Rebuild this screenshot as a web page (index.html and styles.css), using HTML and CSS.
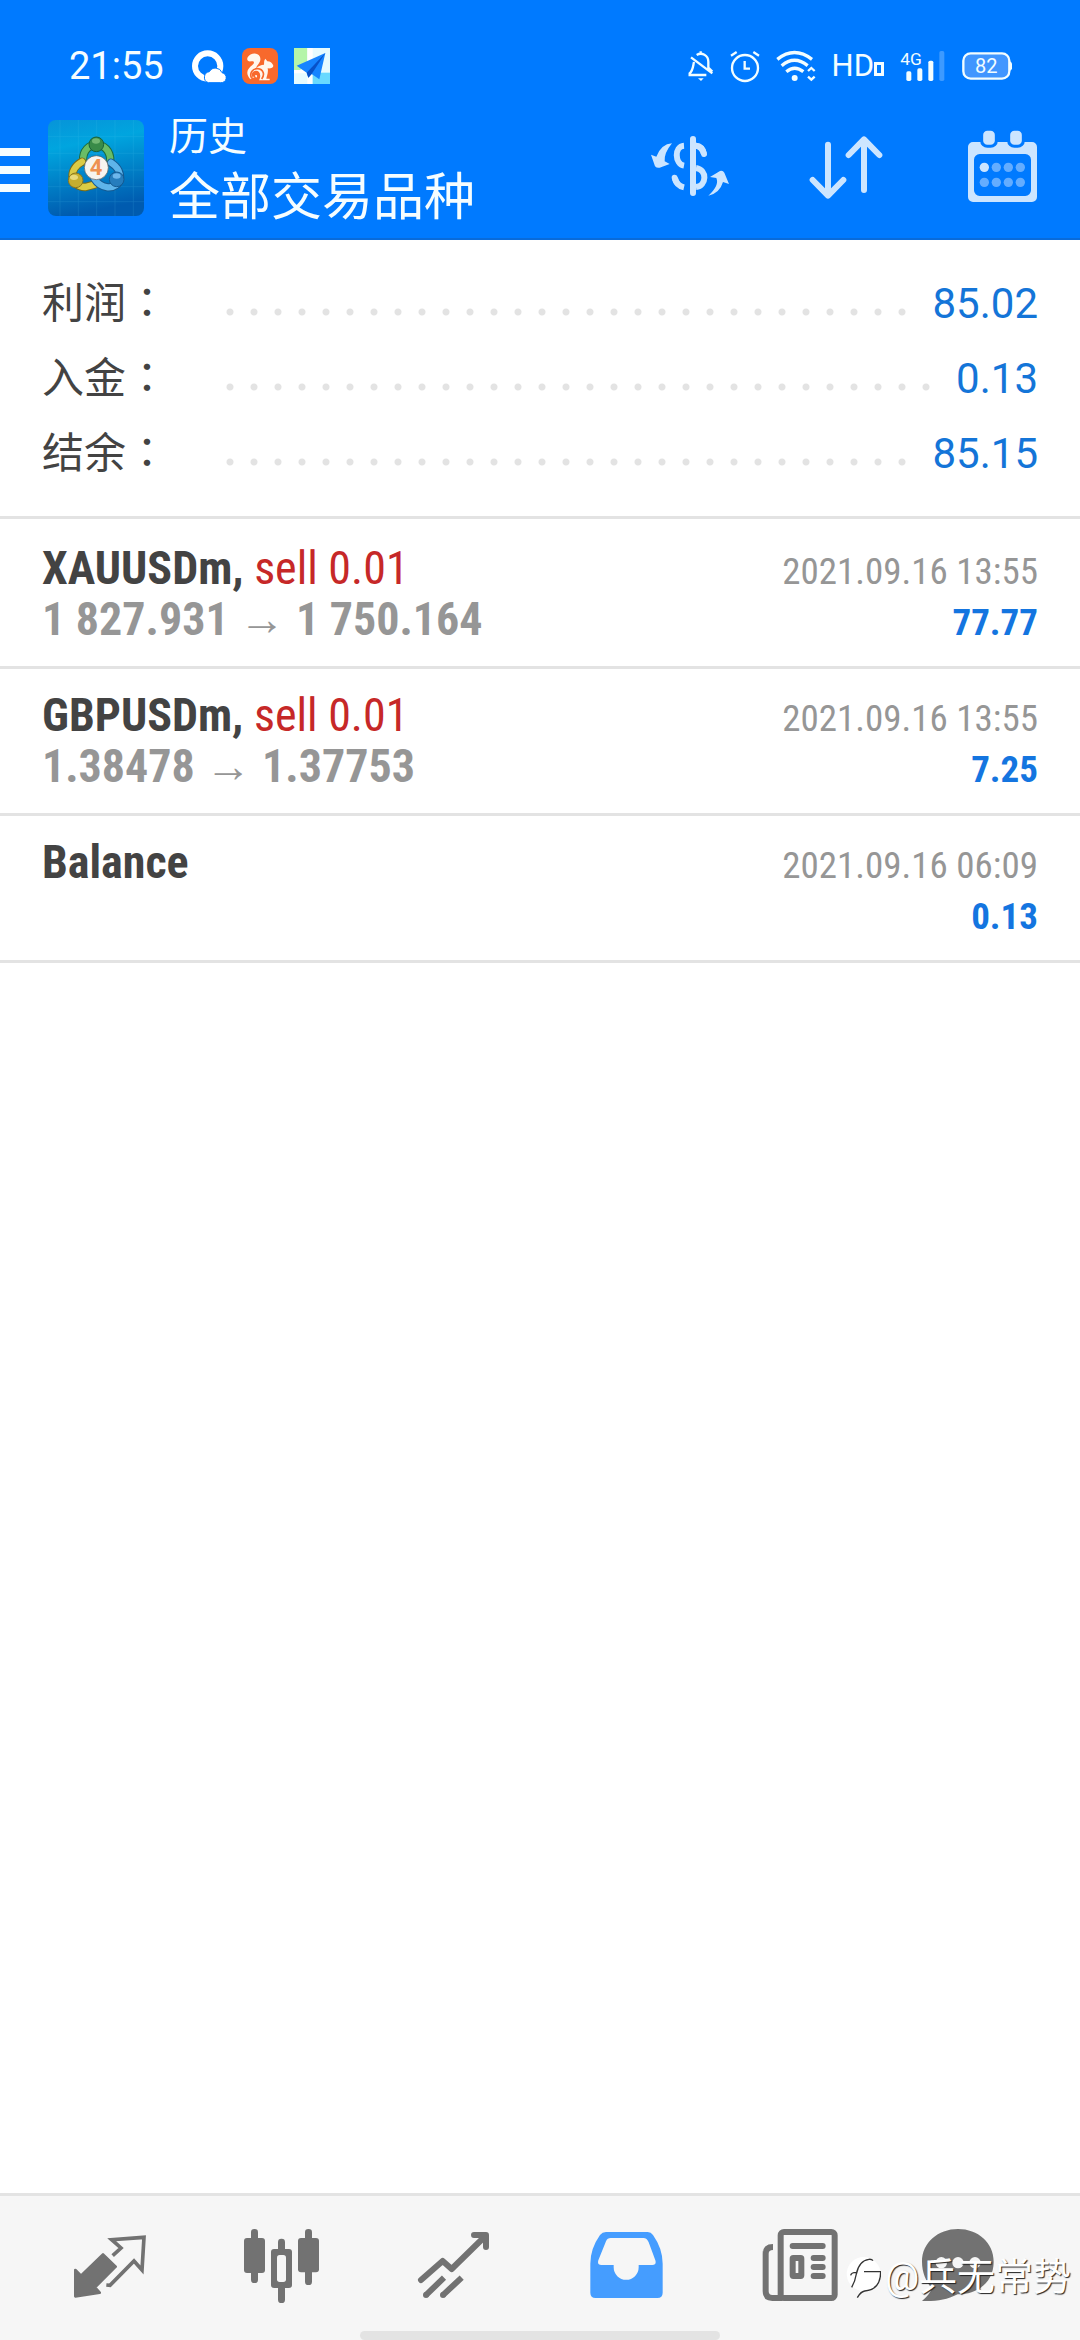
FILE: index.html
```html
<!DOCTYPE html>
<html lang="zh-CN">
<head>
<meta charset="utf-8">
<meta name="viewport" content="width=device-width, initial-scale=1">
<title>历史</title>
<link rel="stylesheet" href="styles.css">
</head>
<body>
<header class="header">
  <div class="status">
    <time class="clock">21:55</time>
    <div class="apps">
      <svg width="36" height="36" viewBox="567 84 108 108" aria-hidden="true">
        <circle cx="620" cy="138" r="38" fill="none" stroke="#fff" stroke-width="18"/>
        <path d="M622 188a17 17 0 0 1 3-33a21 21 0 0 1 38 3a15 15 0 0 1-5 30z" fill="#fff" stroke="#007aff" stroke-width="3"/>
      </svg>
      <svg width="36" height="36" viewBox="723 84 108 108" aria-hidden="true">
        <rect x="723" y="84" width="108" height="108" rx="24" fill="#f8692c"/>
        <path d="M748 178c-16-19-9-31 6-43c9-8 4-13-3-11c-10 2-15-4-11-12c7-13 29-16 36-3c8 16-8 24-11 36c8-8 15-10 24-11c1-8-1-12 4-18l6 8c9 0 16 6 18 13c0 7-9 9-17 8c3 14-4 25-4 31h10v5h-32c9-18 0-30-10-29c-15 2-16 22-2 22c7 0 9-9 2-10" fill="#fff7ed"/>
        <path d="M752 174c-8-13 3-29 18-28c18 2 22 18 12 31M766 175a8 8 0 1 1 8-13" fill="none" stroke="#f8692c" stroke-width="5"/>
      </svg>
      <svg width="36" height="36" viewBox="879 84 108 108" aria-hidden="true">
        <path fill="#e6fbff" d="M879 84h108v108H879z"/>
        <path fill="#b5f5a9" d="M879 84h40v44l-22 22h-18z"/>
        <path fill="#fff" d="M919 84h16v108h-16zM879 150h40v10h-40z"/>
        <path fill="#68d9ff" d="M935 158h52v34h-52z"/>
        <path fill="#1684ff" d="M973 99l-86 38 30 21 5 15 10-11 23 16z"/>
        <path fill="#0751c8" d="M973 99l-56 59 5 15 10-11z"/>
      </svg>
    </div>
    <div class="indicators">
      <svg width="26" height="36" viewBox="134 84 78 108" fill="none" stroke="#f2fdff" stroke-width="7" aria-hidden="true">
        <path d="M143 112l64 48M152 126c-3 10-2 24-13 34v5h50M160 105c15-9 35 0 35 20v18l12 12M172 94v8"/><path d="M164 175h17l-8 8z" fill="#f2fdff" stroke="none"/>
      </svg>
      <svg width="30" height="36" viewBox="261 84 90 108" fill="none" stroke="#f2fdff" stroke-width="7" aria-hidden="true">
        <circle cx="306" cy="144" r="39"/><path d="M305 123v23h16M264 107l17-11M331 96l17 11"/>
      </svg>
      <svg width="40" height="36" viewBox="409 84 120 108" fill="none" stroke="#f2fdff" stroke-width="10" aria-hidden="true">
        <path d="M413 118q51-41 104 0M426 137q38-32 78 0M440 155q25-21 51 0"/><circle cx="465" cy="174" r="9" fill="#f2fdff" stroke="none"/><path d="M505 153l10-9 10 9M505 170l10 9 10-9" stroke-width="7"/>
      </svg>
      <span class="hd">HD<i class="sim"></i></span>
      <svg width="46" height="36" viewBox="773 84 138 108" aria-hidden="true">
        <text x="774" y="136" class="network">4G</text>
        <g fill="#f2fdff"><rect x="792" y="154" width="15" height="29" rx="5"/><rect x="825" y="145" width="15" height="38" rx="5"/><rect x="858" y="122" width="15" height="61" rx="5"/><rect x="891" y="93" width="15" height="90" rx="5" opacity=".25"/></g>
      </svg>
      <svg width="50" height="36" viewBox="962 84 150 108" aria-hidden="true">
        <rect x="966" y="100" width="138" height="76" rx="22" fill="#4096ff" stroke="#f2fdff" stroke-width="7"/>
        <path d="M1106 124q7 3 7 14t-7 14z" fill="#f2fdff"/><text x="1035" y="160" text-anchor="middle" class="battery">82</text>
      </svg>
    </div>
  </div>
  <div class="toolbar">
    <button class="menu" aria-label="菜单"><i></i><i></i><i></i></button>
    <svg class="logo" width="96" height="96" viewBox="144 300 288 288" aria-hidden="true">
      <defs>
        <linearGradient id="sky" x1="0" y1="0" x2=".2" y2="1"><stop stop-color="#0794d8"/><stop offset=".3" stop-color="#00a5df"/><stop offset="1" stop-color="#005baf"/></linearGradient>
      </defs>
      <rect x="144" y="300" width="288" height="288" rx="24" fill="url(#sky)"/>
      <path d="M180 300v288M235 300v288M290 300v288M345 300v288M400 300v288M144 350h288M144 400h288M144 450h288M144 500h288M144 545h288" stroke="#5bcdf2" stroke-width="2" opacity=".2"/>
      <g fill="none" stroke-linecap="round">
        <path d="M249 425c-4-68 84-68 82 0" stroke="#1d6b3d" stroke-width="25"/>
        <path d="M249 425c-4-68 84-68 82 0" stroke="#69bd66" stroke-width="19"/>
        <path d="M246 425c-46 26-32 78 10 76l30-8" stroke="#786b18" stroke-width="25"/>
        <path d="M246 425c-46 26-32 78 10 76l30-8" stroke="#dbcb45" stroke-width="19"/>
        <path d="M333 428c44 28 30 77-10 74c-18-2-32-13-40-26" stroke="#155a91" stroke-width="25"/>
        <path d="M333 428c44 28 30 77-10 74c-18-2-32-13-40-26" stroke="#5eb4ea" stroke-width="19"/>
      </g>
      <g stroke-width="3">
        <circle cx="289" cy="373" r="22" fill="#398b48" stroke="#17603b"/><circle cx="227" cy="481" r="22" fill="#c5ae2f" stroke="#877522"/><circle cx="350" cy="478" r="22" fill="#267dbd" stroke="#155a91"/>
      </g>
      <ellipse cx="288" cy="363" rx="12" ry="8" fill="#8acb85" opacity=".7"/><ellipse cx="222" cy="472" rx="12" ry="8" fill="#f6eb9a" opacity=".7"/><ellipse cx="350" cy="468" rx="12" ry="8" fill="#8cceff" opacity=".7"/>
      <circle cx="289" cy="443" r="36" fill="#f6f4ef" stroke="#555" stroke-width="2"/>
      <text x="288" y="466" text-anchor="middle" class="version">4</text>
    </svg>
    <div class="titles"><h1>历史</h1><p>全部交易品种</p></div>
    <div class="actions">
      <button aria-label="货币"><svg width="156" height="144" viewBox="-84 228 468 432" fill="none" stroke="#cce5ff" stroke-width="18" stroke-linecap="round">
        <path d="M159 357v162M168 377q18 2 24 25M132 377c-30 2-28 55 0 60M105 474q4 23 27 28" stroke-linecap="butt"/><path d="M168 377q20 2 24 25M104 473q1 8 6 14M159 357v162"/><path d="M168 444c35 6 32 53 0 57" stroke-linecap="butt"/>
        <path d="M96 370Q64 372 49 410l-16-6 12 35q6 6 14 4l30-11-15-8q-2-25 22-54zM205 527q34-31 24-53l-19-3 30-18q9-2 13 5l14 34-18-6q-10 34-44 41z" fill="#cce5ff" stroke="none"/>
      </svg></button>
      <button aria-label="排序"><svg width="156" height="144" viewBox="384 228 468 432" fill="none" stroke="#cce5ff" stroke-width="18" stroke-linecap="round" stroke-linejoin="round">
        <path d="M564 374v152M518 480l46 47 46-47M672 510V359M626 405l46-47 46 47"/>
      </svg></button>
      <button aria-label="日期"><svg width="156" height="144" viewBox="852 228 468 432">
        <path fill="#cce5ff" fill-rule="evenodd" d="M999 366H1176a15 15 0 0 1 15 15V531a15 15 0 0 1-15 15H999a15 15 0 0 1-15-15V381a15 15 0 0 1 15-15zM1019 402a17 17 0 0 0-17 17v92a17 17 0 0 0 17 17h137a17 17 0 0 0 17-17v-92a17 17 0 0 0-17-17z"/>
        <g fill="#cce5ff" stroke="#007aff" stroke-width="9"><rect x="1025" y="328" width="44" height="51" rx="17"/><rect x="1106" y="328" width="44" height="51" rx="17"/></g>
        <g fill="#64adff"><circle cx="1033" cy="442" r="14" fill="#cce5ff"/><circle cx="1069" cy="442" r="14"/><circle cx="1105" cy="442" r="14"/><circle cx="1141" cy="442" r="14"/><circle cx="1033" cy="487" r="14"/><circle cx="1069" cy="487" r="14"/><circle cx="1105" cy="487" r="14"/><circle cx="1141" cy="487" r="14"/></g>
      </svg></button>
    </div>
  </div>
</header>

<main class="content">
  <dl class="summary">
    <div class="total"><dt>利润<span class="colon" lang="zh-TW">：</span></dt><dd>85.02</dd></div>
    <div class="total"><dt>入金<span class="colon" lang="zh-TW">：</span></dt><dd>0.13</dd></div>
    <div class="total"><dt>结余<span class="colon" lang="zh-TW">：</span></dt><dd>85.15</dd></div>
  </dl>
  <ul class="deals">
    <li class="deal">
      <p class="line"><strong class="symbol">XAUUSDm, <span class="side">sell 0.01</span></strong><time class="date">2021.09.16 13:55</time></p>
      <p class="line"><span class="prices">1 827.931 → 1 750.164</span><b class="profit">77.77</b></p>
    </li>
    <li class="deal">
      <p class="line"><strong class="symbol">GBPUSDm, <span class="side">sell 0.01</span></strong><time class="date">2021.09.16 13:55</time></p>
      <p class="line"><span class="prices">1.38478 → 1.37753</span><b class="profit">7.25</b></p>
    </li>
    <li class="deal">
      <p class="line"><strong class="symbol">Balance</strong><time class="date">2021.09.16 06:09</time></p>
      <p class="line"><span class="prices">&nbsp;</span><b class="profit">0.13</b></p>
    </li>
  </ul>
</main>

<nav class="tabs">
  <a href="#quotes" aria-label="行情"><svg width="172" height="144" viewBox="72 48 516 432">
    <path fill="#727272" stroke="#727272" stroke-width="8" stroke-linejoin="round" d="M226 270l17 17 66-64 38 37-62 62 14 16-73 11z"/>
    <path fill="none" stroke="#727272" stroke-width="11" d="M338 227l25-23-28-25 97-7-6 98-24-27-72 73-11-1"/>
  </svg></a>
  <a href="#charts" aria-label="图表"><svg width="172" height="144" viewBox="588 48 516 432" fill="#727272">
    <rect x="732" y="174" width="63" height="105" rx="9"/><rect x="753" y="147" width="21" height="162" rx="10"/>
    <rect x="894" y="174" width="63" height="103" rx="9"/><rect x="915" y="147" width="21" height="168" rx="10"/>
    <rect x="813" y="207" width="63" height="117" rx="9"/><rect x="834" y="176" width="21" height="40" rx="10"/><rect x="834" y="315" width="21" height="54" rx="10"/><rect x="831" y="225" width="27" height="81" rx="8" fill="#f6f6f6"/>
  </svg></a>
  <a href="#trade" aria-label="交易"><svg width="172" height="144" viewBox="24 48 516 432" fill="none" stroke="#727272" stroke-width="18" stroke-linejoin="round">
    <path stroke-linecap="round" d="M183 300l65-57 27 24 98-96M342 165h36v36"/><path d="M197 346l55-53M248 346l57-53"/><g fill="#727272" stroke="none"><circle cx="198" cy="345" r="9"/><circle cx="249" cy="345" r="9"/></g>
  </svg></a>
  <a href="#history" aria-label="历史" aria-current="page"><svg width="172" height="144" viewBox="540 48 516 432">
    <path fill="#459dff" fill-rule="evenodd" d="M738 156H863q10 0 16 9q29 41 29 86v87q0 16-16 16H707q-16 0-16-16V251q0-45 29-86q7-9 18-9zM752 174q-10 0-14 10l-23 57q-4 14 9 14h37v7a37 37 0 0 0 75 0v-7h41q13 0 9-14l-20-54q-5-13-16-13z"/>
  </svg></a>
  <a href="#news" aria-label="新闻"><svg width="172" height="144" viewBox="-24 48 516 432" fill="none" stroke="#727272" stroke-width="18">
    <rect x="182" y="156" width="162" height="198" rx="10"/><path d="M159 201q-22 0-22 20v113q0 20 20 20h30"/>
    <path stroke-linecap="round" d="M218 198h90M281 234h27M281 261h27M281 288h27"/><rect x="218" y="234" width="26" height="54" rx="2"/>
  </svg></a>
  <a href="#messages" aria-label="消息"><svg width="172" height="144" viewBox="492 48 516 432">
    <path fill="#727272" d="M714 147c60 0 107 41 107 98c0 62-48 98-108 98c-35 17-60 21-107 20q20-16 31-38c-19-18-31-48-31-80c0-57 48-98 108-98z"/>
    <g fill="#f6f6f6"><circle cx="664" cy="248" r="17"/><circle cx="714" cy="248" r="17"/><circle cx="765" cy="248" r="17"/></g>
  </svg></a>
  <div class="watermark">
    <svg width="36" height="42" viewBox="366 243 108 126" aria-hidden="true">
      <circle cx="422" cy="297" r="51" fill="#fff"/><path d="M383 301q2-10 20-9M386 337q10-16 14-40q8-40 38-44q8-1 12 4M423 290h50q0 54-48 58q-12 2-22 20" fill="none" stroke="#333" stroke-width="4"/>
    </svg><span>@兵无常势</span>
  </div>
  <i class="home-bar"></i>
</nav>
</body>
</html>
```
FILE: styles.css
```css
* { box-sizing: border-box; }

body {
  margin: 0;
  min-height: 100vh;
  display: flex;
  flex-direction: column;
  background: #fff;
  color: #434343;
  font-family: Roboto, "Noto Sans CJK SC", sans-serif;
}

h1, p, ul, dl, dd { margin: 0; padding: 0; }
svg { display: block; flex: none; }
button { padding: 0; border: 0; background: none; }

/* Header */
.header {
  background: #007aff;
  color: #f5fdff;
  box-shadow: inset 0 -2px #096bda;
}

.status {
  display: flex;
  align-items: center;
  height: 96px;
  padding: 36px 68px 0 69px;
}

.clock { font-size: 38px; line-height: 60px; }
.apps { display: flex; gap: 16px; margin-left: 26px; }
.indicators { display: flex; align-items: center; gap: 16px; margin-left: auto; }
.hd { display: flex; align-items: baseline; font-size: 31px; line-height: 36px; }
.sim { width: 10px; height: 14px; border: 3px solid #f5fdff; }
.network { font: 52px Roboto, sans-serif; fill: #f2fdff; }
.battery { font: 60px Roboto, sans-serif; fill: #f2fdff; }
.version { font: bold 66px Roboto, sans-serif; fill: #ee9150; }

.toolbar { display: flex; align-items: center; height: 144px; }
.menu { display: flex; flex-direction: column; gap: 10px; width: 30px; padding-top: 4px; }
.menu i { height: 8px; background: #f5fdff; }
.logo { margin-left: 18px; }
.titles { margin-left: 25px; padding-top: 4px; white-space: nowrap; }
.titles h1 { font-size: 39px; font-weight: 400; line-height: 56px; }
.titles p { font-size: 51px; line-height: 66px; }
.actions { display: flex; margin-left: auto; }

/* Totals */
.summary { padding: 26px 42px 25px; border-bottom: 3px solid #e3e3e3; }
.total { display: flex; align-items: center; font-size: 42px; line-height: 75px; }
.total dt { width: 176px; }
.total dd { flex: 1; display: flex; align-items: center; color: #1475d8; }
.total dd::before {
  content: "";
  flex: 1;
  height: 8px;
  margin: 16px 16px 0 0;
  background: radial-gradient(circle at center, #e3e3e3 3px, transparent 4px) 0 0 / 24px 8px repeat-x;
}
.colon { font-family: "Noto Sans CJK TC", sans-serif; line-height: 1; }

/* Deals */
.deals { padding-top: 3px; list-style: none; font-family: "Roboto Condensed", "Liberation Sans Narrow", Roboto, sans-serif; }
.deal { padding: 21px 42px; border-bottom: 3px solid #e3e3e3; }
.line { display: flex; justify-content: space-between; align-items: baseline; height: 51px; line-height: 51px; white-space: nowrap; }
.symbol, .prices { font-size: 46px; font-weight: 700; }
.side { color: #c62828; font-weight: 400; }
.prices { color: #969696; }
.date, .profit { font-size: 37px; }
.date { color: #969696; }
.profit { color: #1475e0; }

/* Bottom tabs */
.tabs {
  position: relative;
  display: flex;
  margin-top: auto;
  padding: 0 24px;
  background: #f6f6f6;
  border-top: 3px solid #e3e3e3;
}
.tabs a { flex: 1; display: flex; justify-content: center; }

.watermark {
  position: absolute;
  right: 9px;
  bottom: 36px;
  display: flex;
  align-items: center;
  gap: 4px;
  color: #fff;
  font-size: 38px;
  line-height: 54px;
  text-shadow: 1px 1px 1px #222;
}

.home-bar {
  position: absolute;
  left: 0;
  right: 0;
  bottom: 0;
  width: 360px;
  height: 9px;
  margin: 0 auto;
  border-radius: 5px;
  background: #e3e3e3;
}
```
